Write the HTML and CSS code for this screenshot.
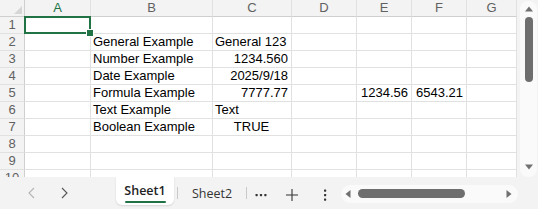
FILE: index.html
```html
<!DOCTYPE html>
<html>
<head>
<meta charset="utf-8">
<link rel="stylesheet" href="styles.css">
</head>
<body>
<div class="app">
  <div class="main">
    <div class="grid">
      <div class="hd corner"><svg width="8" height="8" viewBox="0 0 8 8"><path d="M8 0 L8 8 L0 8 Z" fill="#d6d6d6"/></svg></div>
      <div class="hd col sel">A</div>
      <div class="hd col">B</div>
      <div class="hd col">C</div>
      <div class="hd col">D</div>
      <div class="hd col">E</div>
      <div class="hd col">F</div>
      <div class="hd col">G</div>

      <div class="hd row">1</div><div class="c"></div><div class="c"></div><div class="c"></div><div class="c"></div><div class="c"></div><div class="c"></div><div class="c"></div>
      <div class="hd row">2</div><div class="c"></div><div class="c">General Example</div><div class="c">General 123</div><div class="c"></div><div class="c"></div><div class="c"></div><div class="c"></div>
      <div class="hd row">3</div><div class="c"></div><div class="c">Number Example</div><div class="c r">1234.560</div><div class="c"></div><div class="c"></div><div class="c"></div><div class="c"></div>
      <div class="hd row">4</div><div class="c"></div><div class="c">Date Example</div><div class="c r">2025/9/18</div><div class="c"></div><div class="c"></div><div class="c"></div><div class="c"></div>
      <div class="hd row">5</div><div class="c"></div><div class="c">Formula Example</div><div class="c r">7777.77</div><div class="c"></div><div class="c r">1234.56</div><div class="c r">6543.21</div><div class="c"></div>
      <div class="hd row">6</div><div class="c"></div><div class="c">Text Example</div><div class="c">Text</div><div class="c"></div><div class="c"></div><div class="c"></div><div class="c"></div>
      <div class="hd row">7</div><div class="c"></div><div class="c">Boolean Example</div><div class="c m">TRUE</div><div class="c"></div><div class="c"></div><div class="c"></div><div class="c"></div>
      <div class="hd row">8</div><div class="c"></div><div class="c"></div><div class="c"></div><div class="c"></div><div class="c"></div><div class="c"></div><div class="c"></div>
      <div class="hd row">9</div><div class="c"></div><div class="c"></div><div class="c"></div><div class="c"></div><div class="c"></div><div class="c"></div><div class="c"></div>
      <div class="hd row">10</div><div class="c"></div><div class="c"></div><div class="c"></div><div class="c"></div><div class="c"></div><div class="c"></div><div class="c"></div>

      <div class="selection"><div class="handle"></div></div>
    </div>
    <div class="vscroll">
      <div class="vtrack">
        <svg class="varrow" width="10" height="8" viewBox="0 0 10 8"><path d="M1 6.5 L5 1.5 L9 6.5 Z" fill="#707070"/></svg>
        <div class="vthumb"></div>
        <div class="vspace"></div>
        <svg class="varrow" width="10" height="8" viewBox="0 0 10 8"><path d="M1 1.5 L5 6.5 L9 1.5 Z" fill="#707070"/></svg>
      </div>
    </div>
  </div>
  <div class="tabbar">
    <div class="nav">
      <span class="navbtn"><svg width="16" height="16" viewBox="0 0 16 16"><path d="M10 3 L5 8 L10 13" fill="none" stroke="#b4b4b4" stroke-width="1.1"/></svg></span>
      <span class="navbtn"><svg width="16" height="16" viewBox="0 0 16 16"><path d="M6 3 L11 8 L6 13" fill="none" stroke="#555" stroke-width="1.1"/></svg></span>
    </div>
    <div class="tab active"><span class="tabtext">Sheet1</span><span class="underline"></span></div>
    <span class="sep"></span>
    <div class="tab">Sheet2</div>
    <span class="sep"></span>
    <span class="tool more"><svg width="14" height="6" viewBox="0 0 14 6"><rect x="1.5" y="2" width="2.2" height="2.2" rx="0.6" fill="#333"/><rect x="5.9" y="2" width="2.2" height="2.2" rx="0.6" fill="#333"/><rect x="10.3" y="2" width="2.2" height="2.2" rx="0.6" fill="#333"/></svg></span>
    <span class="tool plus"><svg width="14" height="14" viewBox="0 0 14 14"><path d="M7 1 V13 M1 7 H13" stroke="#333" stroke-width="1.1"/></svg></span>
    <span class="tool kebab"><svg width="6" height="14" viewBox="0 0 6 14"><rect x="2" y="1.5" width="2.2" height="2.2" rx="0.6" fill="#333"/><rect x="2" y="6" width="2.2" height="2.2" rx="0.6" fill="#333"/><rect x="2" y="10.5" width="2.2" height="2.2" rx="0.6" fill="#333"/></svg></span>
    <div class="htrack">
      <svg width="8" height="10" viewBox="0 0 8 10"><path d="M6.5 1 L1.5 5 L6.5 9 Z" fill="#707070"/></svg>
      <div class="hthumb"></div>
      <div class="hspace"></div>
      <svg width="8" height="10" viewBox="0 0 8 10"><path d="M1.5 1 L6.5 5 L1.5 9 Z" fill="#707070"/></svg>
    </div>
  </div>
</div>
</body>
</html>
```

FILE: styles.css
```css
html, body {
  margin: 0;
  padding: 0;
  background: #f3f3f3;
}

.app {
  width: 538px;
  height: 209px;
  display: flex;
  flex-direction: column;
  overflow: hidden;
  font-family: "Liberation Sans", Arial, sans-serif;
  font-size: 13px;
  color: #000;
}

.main {
  display: flex;
  height: 177px;
  flex: none;
}

.grid {
  position: relative;
  width: 517px;
  height: 177px;
  overflow: hidden;
  background: #fff;
  display: grid;
  grid-template-columns: 25px 66px 122px 79px 65px 55px 55px 50px;
  grid-auto-rows: 17px;
}

.grid > div {
  box-sizing: border-box;
}

.c {
  border-right: 1px solid #e1e1e1;
  border-bottom: 1px solid #e1e1e1;
  padding: 0 3px 0 2px;
  line-height: 16px;
  white-space: nowrap;
  overflow: visible;
}

.c.r { text-align: right; }
.c.m { text-align: center; }

.hd {
  background: #f3f3f3;
  color: #616161;
  line-height: 16px;
  text-align: center;
  border-right: 1px solid #e1e1e1;
  border-bottom: 1px solid #e1e1e1;
}

.hd.col {
  border-bottom-color: #cfcfcf;
}

.hd.row {
  border-right-color: #cfcfcf;
}

.hd.sel {
  color: #217346;
}

.corner {
  display: flex;
  align-items: flex-end;
  justify-content: flex-end;
  padding: 0 2px 2px 0;
  border-right-color: #cfcfcf !important;
  border-bottom-color: #cfcfcf !important;
}

.corner svg { display: block; }

.selection {
  position: absolute;
  left: 24px;
  top: 16px;
  width: 67px;
  height: 18px;
  border: 2px solid #217346;
  box-sizing: border-box;
}

.handle {
  position: absolute;
  right: -5px;
  bottom: -5px;
  width: 6px;
  height: 6px;
  background: #217346;
  border: 1px solid #fff;
}

.vscroll {
  width: 21px;
  display: flex;
  padding: 1px 1px 0 3px;
  box-sizing: border-box;
}

.vtrack {
  flex: 1;
  background: #fafafa;
  border-radius: 8px;
  display: flex;
  flex-direction: column;
  align-items: center;
  padding: 4px 0 6px;
}

.varrow { display: block; flex: none; }

.vthumb {
  width: 8px;
  height: 65px;
  margin-top: 4px;
  background: #6e6e6e;
  border-radius: 4px;
  flex: none;
}

.vspace { flex: 1; }

.tabbar {
  flex: 1;
  display: flex;
  align-items: center;
  background: #f3f3f3;
  color: #333;
  font-family: "Open Sans", "Noto Sans", sans-serif;
  font-size: 12.5px;
}

.nav {
  width: 116px;
  display: flex;
  gap: 16px;
  padding-left: 24px;
  box-sizing: border-box;
  flex: none;
}

.navbtn {
  width: 16px;
  height: 16px;
  display: flex;
}

.tab {
  flex: none;
  height: 28px;
  width: 68px;
  display: flex;
  align-items: center;
  justify-content: center;
}

.tab.active {
  align-self: flex-start;
  width: 58px;
  background: #fff;
  border-radius: 0 0 6px 6px;
  box-shadow: 0 1px 2px rgba(0, 0, 0, 0.12);
  flex-direction: column;
  justify-content: flex-start;
  padding-top: 5px;
  box-sizing: border-box;
  font-weight: 600;
  color: #222;
}

.tabtext {
  line-height: 17px;
}

.underline {
  display: block;
  width: 41px;
  height: 2px;
  margin-top: 2px;
  background: #217346;
  border-radius: 1px;
}

.sep {
  flex: none;
  width: 1px;
  height: 12px;
  background: #c9c9c9;
  margin-left: 3px;
}

.tab.active + .sep { margin-left: 3px; }
.tab + .sep { margin-left: 0; }

.tool {
  flex: none;
  display: flex;
  align-items: center;
  justify-content: center;
  height: 20px;
  margin-top: 3px;
}

.more { width: 28px; }
.plus { width: 34px; }
.kebab { width: 32px; }

.htrack {
  flex: none;
  width: 177px;
  height: 18px;
  margin-top: 1px;
  background: #fafafa;
  border-radius: 9px;
  display: flex;
  align-items: center;
  padding: 0 5px 0 3px;
  box-sizing: border-box;
}

.htrack svg { flex: none; display: block; }

.hthumb {
  flex: none;
  width: 107px;
  height: 9px;
  margin-left: 6px;
  background: #6e6e6e;
  border-radius: 4.5px;
}

.hspace { flex: 1; }
```
